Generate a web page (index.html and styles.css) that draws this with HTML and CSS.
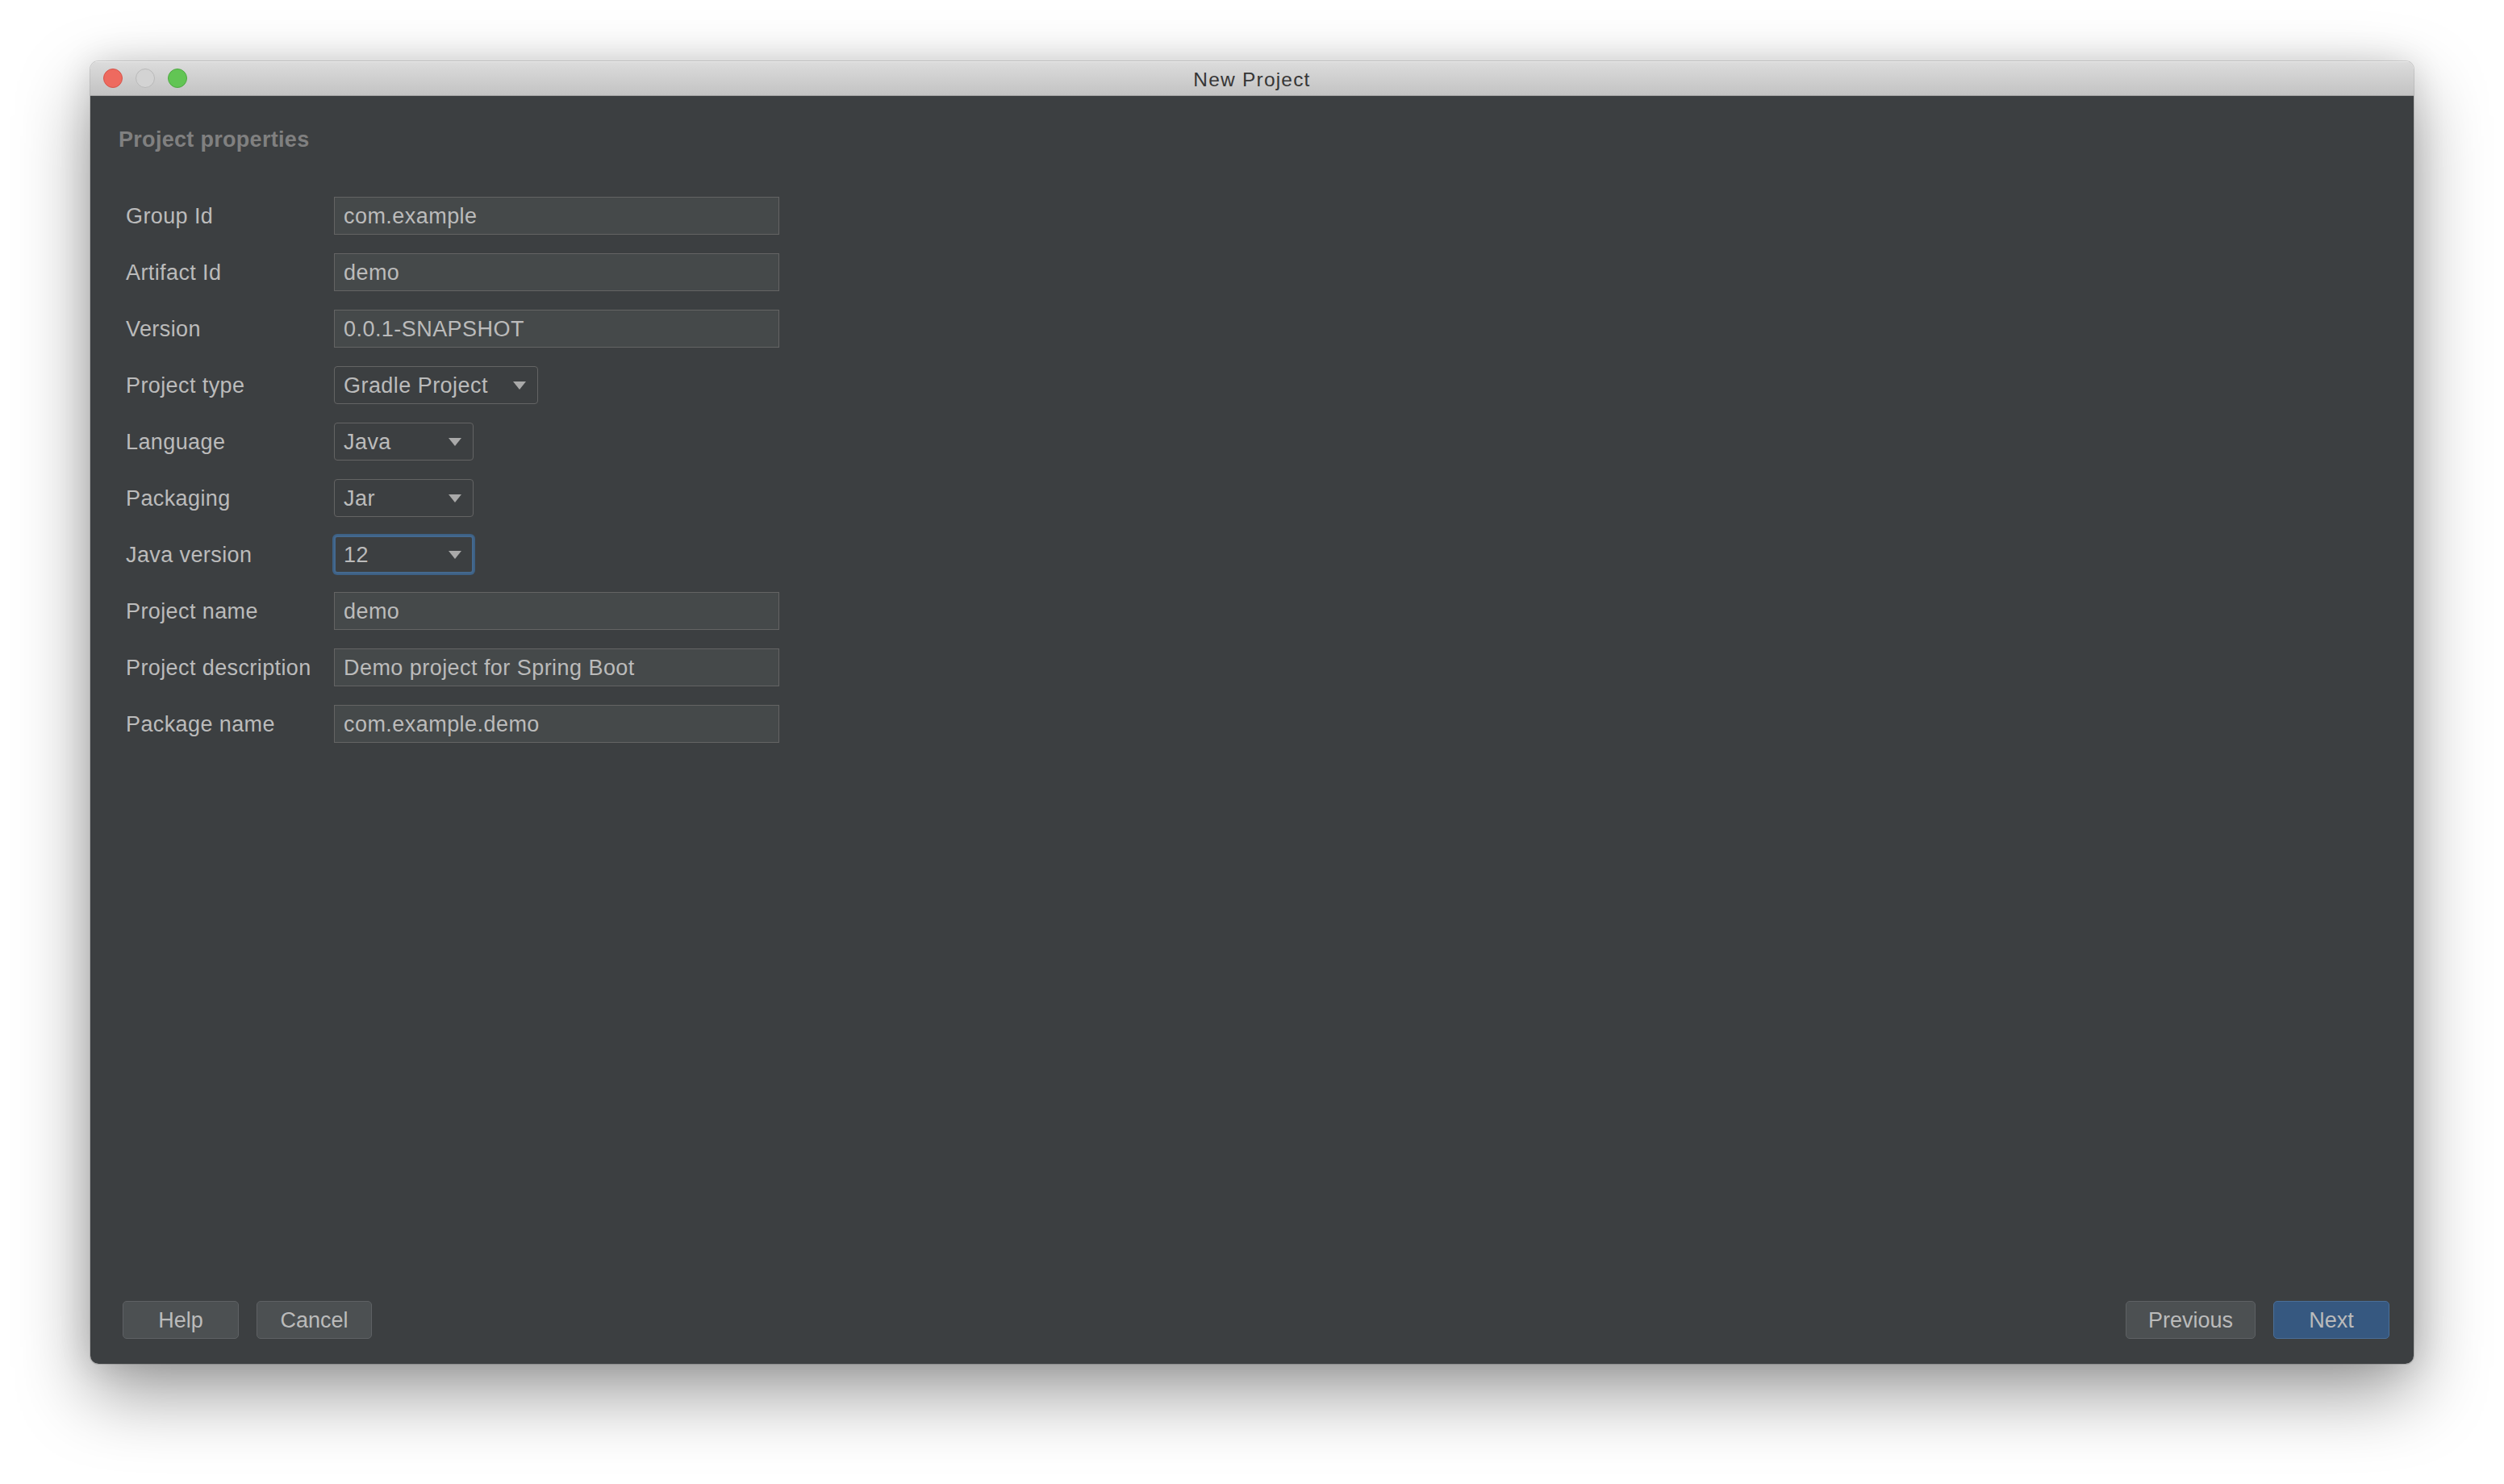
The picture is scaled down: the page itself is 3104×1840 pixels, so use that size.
FILE: index.html
```html
<!DOCTYPE html>
<html lang="en">
<head>
<meta charset="utf-8">
<title>New Project</title>
<link rel="stylesheet" href="styles.css">
</head>
<body>
<div class="window">
  <div class="titlebar">
    <div class="lights">
      <span class="light red"></span>
      <span class="light gray"></span>
      <span class="light green"></span>
    </div>
    <div class="title">New Project</div>
    <div class="spacer"></div>
  </div>
  <div class="content">
    <div class="main">
      <div class="heading">Project properties</div>
      <div class="form">
        <div class="label">Group Id</div>
        <div class="field">com.example</div>

        <div class="label">Artifact Id</div>
        <div class="field">demo</div>

        <div class="label">Version</div>
        <div class="field">0.0.1-SNAPSHOT</div>

        <div class="label">Project type</div>
        <div class="combo combo-wide"><span>Gradle Project</span><svg class="arrow" viewBox="0 0 16 10"><path d="M0 0 H16 L8 10 Z"/></svg></div>

        <div class="label">Language</div>
        <div class="combo"><span>Java</span><svg class="arrow" viewBox="0 0 16 10"><path d="M0 0 H16 L8 10 Z"/></svg></div>

        <div class="label">Packaging</div>
        <div class="combo"><span>Jar</span><svg class="arrow" viewBox="0 0 16 10"><path d="M0 0 H16 L8 10 Z"/></svg></div>

        <div class="label">Java version</div>
        <div class="combo focused"><span>12</span><svg class="arrow" viewBox="0 0 16 10"><path d="M0 0 H16 L8 10 Z"/></svg></div>

        <div class="label">Project name</div>
        <div class="field">demo</div>

        <div class="label">Project description</div>
        <div class="field">Demo project for Spring Boot</div>

        <div class="label">Package name</div>
        <div class="field">com.example.demo</div>
      </div>
    </div>
    <div class="footer">
      <div class="group">
        <button class="btn btn-help">Help</button>
        <button class="btn btn-cancel">Cancel</button>
      </div>
      <div class="group">
        <button class="btn btn-prev">Previous</button>
        <button class="btn btn-next">Next</button>
      </div>
    </div>
  </div>
</div>
</body>
</html>
```

FILE: styles.css
```css
html, body {
  margin: 0;
  padding: 0;
  background: #ffffff;
}

body {
  box-sizing: border-box;
  min-height: 1840px;
  padding: 76px 0 0 112px;
  font-family: "Liberation Sans", Arial, sans-serif;
}

.window {
  width: 2880px;
  height: 1615px;
  border-radius: 10px;
  display: flex;
  flex-direction: column;
  overflow: hidden;
  box-shadow: 0 36px 90px rgba(0, 0, 0, 0.4), 0 0 40px rgba(0, 0, 0, 0.12), 0 0 0 1px rgba(0, 0, 0, 0.14);
}

.titlebar {
  height: 42px;
  flex: none;
  display: grid;
  grid-template-columns: 1fr auto 1fr;
  align-items: center;
  background: linear-gradient(#dcdcdc, #c3c3c3);
  border-bottom: 1px solid #a6a6a6;
  box-shadow: inset 0 1px 0 #ececec;
}

.lights {
  display: flex;
  gap: 16px;
  padding-left: 16px;
}

.light {
  width: 22px;
  height: 22px;
  border-radius: 50%;
  border: 1px solid transparent;
}

.red { background: #ee6a5f; border-color: #d5544a; }
.gray { background: #d3d3d3; border-color: #b9b9b9; }
.green { background: #62c554; border-color: #4fa843; }

.title {
  padding-top: 3px;
  font-size: 24.5px;
  letter-spacing: 1.2px;
  color: #363636;
}

.content {
  flex: 1;
  display: flex;
  flex-direction: column;
  background: #3c3f41;
}

.main {
  flex: 1;
  padding: 38px 0 0 35px;
}

.heading {
  font-size: 27px;
  line-height: 32px;
  font-weight: bold;
  letter-spacing: 0.3px;
  color: #808080;
}

.form {
  margin-top: 55px;
  padding-left: 9px;
  display: grid;
  grid-template-columns: 258px auto;
  grid-auto-rows: 47px;
  row-gap: 23px;
  justify-items: start;
  align-items: center;
}

.label {
  padding-top: 2px;
  font-size: 27px;
  letter-spacing: 0.4px;
  color: #bbbbbb;
}

.field {
  box-sizing: border-box;
  width: 552px;
  height: 47px;
  padding: 2px 0 0 11px;
  display: flex;
  align-items: center;
  background: #45494a;
  border: 1px solid #646464;
  font-size: 27px;
  letter-spacing: 0.45px;
  color: #bbbbbb;
}

.combo {
  box-sizing: border-box;
  width: 173px;
  height: 47px;
  padding: 2px 14px 0 11px;
  display: flex;
  align-items: center;
  justify-content: space-between;
  background: #3c3f41;
  border: 1px solid #646464;
  border-radius: 4px;
  font-size: 27px;
  letter-spacing: 0.45px;
  color: #bbbbbb;
}

.combo .arrow {
  margin-top: -2px;
}

.combo-wide {
  width: 253px;
}

.combo.focused {
  border: 2px solid #44698f;
  padding-left: 10px;
  padding-right: 13px;
  box-shadow: 0 0 0 2px #3d6185;
}

.arrow {
  width: 16px;
  height: 10px;
  fill: #a9a9a9;
}

.footer {
  flex: none;
  display: flex;
  justify-content: space-between;
  padding: 0 30px 31px 40px;
}

.group {
  display: flex;
  gap: 22px;
}

.btn {
  box-sizing: border-box;
  height: 47px;
  margin: 0;
  padding: 2px 0 0 0;
  background: #4c5052;
  border: 1px solid #5e6164;
  border-radius: 5px;
  font-family: "Liberation Sans", Arial, sans-serif;
  font-size: 27px;
  color: #bbbbbb;
}

.btn-help { width: 144px; }
.btn-cancel { width: 143px; }
.btn-prev { width: 161px; }
.btn-next {
  width: 144px;
  background: #365880;
  border-color: #4a6f99;
}
```
